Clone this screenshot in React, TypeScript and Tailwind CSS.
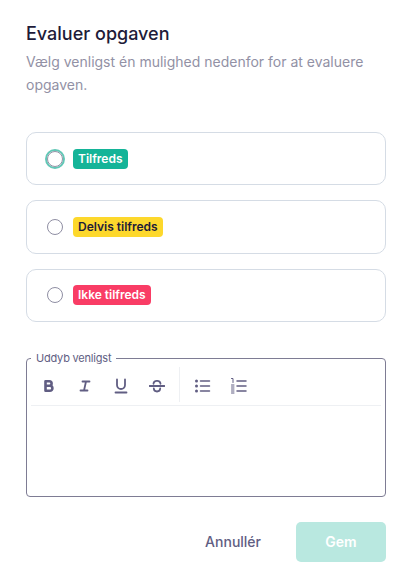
const options = [
    { label: "Tilfreds", tag: "bg-[#14b498] text-white", focused: true },
    { label: "Delvis tilfreds", tag: "bg-[#fdd82c] text-[#1e1b39]", focused: false },
    { label: "Ikke tilfreds", tag: "bg-[#f93c65] text-white", focused: false },
];

function ToolIcon({ children }: { children: React.ReactNode }) {
    return (
        <svg width="16" height="16" viewBox="0 0 16 16" fill="none" stroke="currentColor" strokeWidth="1.8" strokeLinecap="round" strokeLinejoin="round">
            {children}
        </svg>
    );
}

export default function App() {
    return (
        <div className="w-[409px] h-[577px] bg-white pl-[26px] pr-[23px] pt-[22px] font-['Inter',sans-serif] overflow-hidden">
            <h2 className="text-[18px] leading-6 font-medium text-[#1e1b39]">Evaluer opgaven</h2>
            <p className="mt-[4px] text-[14px] leading-[23px] text-[#9291a5]">
                Vælg venligst én mulighed nedenfor for at evaluere opgaven.
            </p>

            <div className="mt-[36px] flex flex-col gap-[15px]">
                {options.map((option) => (
                    <div key={option.label} className="h-[53.4px] flex items-center pl-[18px] rounded-[10px] border border-[#d5dce5]">
                        <span className="w-[19px] flex justify-center">
                            {option.focused ? (
                                <span className="shrink-0 w-[20px] h-[20px] rounded-full border-2 border-[#62c7b6] bg-white outline outline-1 -outline-offset-3 outline-[#9291a5]" />
                            ) : (
                                <span className="shrink-0 w-[16px] h-[16px] rounded-full border border-[#8f8ea3] bg-white" />
                            )}
                        </span>
                        <span className={`ml-[9px] h-[20px] px-[5px] flex items-center rounded-[4px] text-[12px] font-semibold ${option.tag}`}>
                            {option.label}
                        </span>
                    </div>
                ))}
            </div>

            <fieldset className="mt-[29.8px] h-[145px] rounded-[4px] border border-[#7e7c94] px-[4px]">
                <legend className="px-[5px] text-[11px] leading-[13px] tracking-[-0.2px] text-[#615e83]">Uddyb venligst</legend>
                <div className="h-[41px] flex items-center border-b border-[#eef0f3]">
                    <div className="flex items-center gap-[20px] pl-[9.5px] pr-[14px] pt-[3px] h-[35px] border-r border-[#eef0f3] text-[#615e83]">
                        <ToolIcon>
                            <path strokeWidth="2.6" d="M4.5 3.2h3.800a2.300 2.300 0 0 1 0 4.600H4.500zM4.500 7.800h4.400a2.500 2.500 0 0 1 0 5H4.500z" />
                        </ToolIcon>
                        <ToolIcon>
                            <path d="M5.500 3.500h7M3.500 12.500h7M9 3.500 7 12.500" />
                        </ToolIcon>
                        <ToolIcon>
                            <path d="M4 1.500V7a4 4 0 0 0 8 0V1.500M2.500 14.500h11" />
                        </ToolIcon>
                        <ToolIcon>
                            <path d="M.5 8h15M11.500 5.800a3.200 3.200 0 0 0-3.500-3 3.200 3.200 0 0 0-3.500 3M4.800 10.500a3.200 3.200 0 0 0 3.200 3 3.200 3.200 0 0 0 3.200-3" />
                        </ToolIcon>
                    </div>
                    <div className="flex items-center gap-[18px] pl-[14px] pt-[3px] text-[#615e83]">
                        <svg width="18" height="18" viewBox="0 0 18 18" fill="none" stroke="currentColor" strokeWidth="1.5" strokeLinecap="round">
                            <circle cx="2.500" cy="4" r="1.500" fill="currentColor" stroke="none" />
                            <circle cx="2.500" cy="9" r="1.500" fill="currentColor" stroke="none" />
                            <circle cx="2.500" cy="14" r="1.500" fill="currentColor" stroke="none" />
                            <path d="M6.500 4h9M6.500 9h9M6.500 14h9" />
                        </svg>
                        <svg width="18" height="18" viewBox="0 0 18 18" fill="none" stroke="currentColor" strokeLinecap="round">
                            <path strokeWidth="1" d="M1.500 1.500h1.500v4M1.500 8h2.500M1.500 10h2.500M1.500 12h2.500M1.500 14h2.500M1.500 16h2.500" />
                            <path strokeWidth="1.500" d="M7 4h9M7 9h9M7 14h9" />
                        </svg>
                    </div>
                </div>
            </fieldset>

            <div className="mt-[25px] flex items-center justify-end">
                <button className="mr-[35px] text-[14px] font-medium text-[#615e83]">Annullér</button>
                <button className="w-[90px] h-[40px] rounded-[5px] bg-[#b9e8e0] text-[14px] font-semibold text-white">Gem</button>
            </div>
        </div>
    );
}
